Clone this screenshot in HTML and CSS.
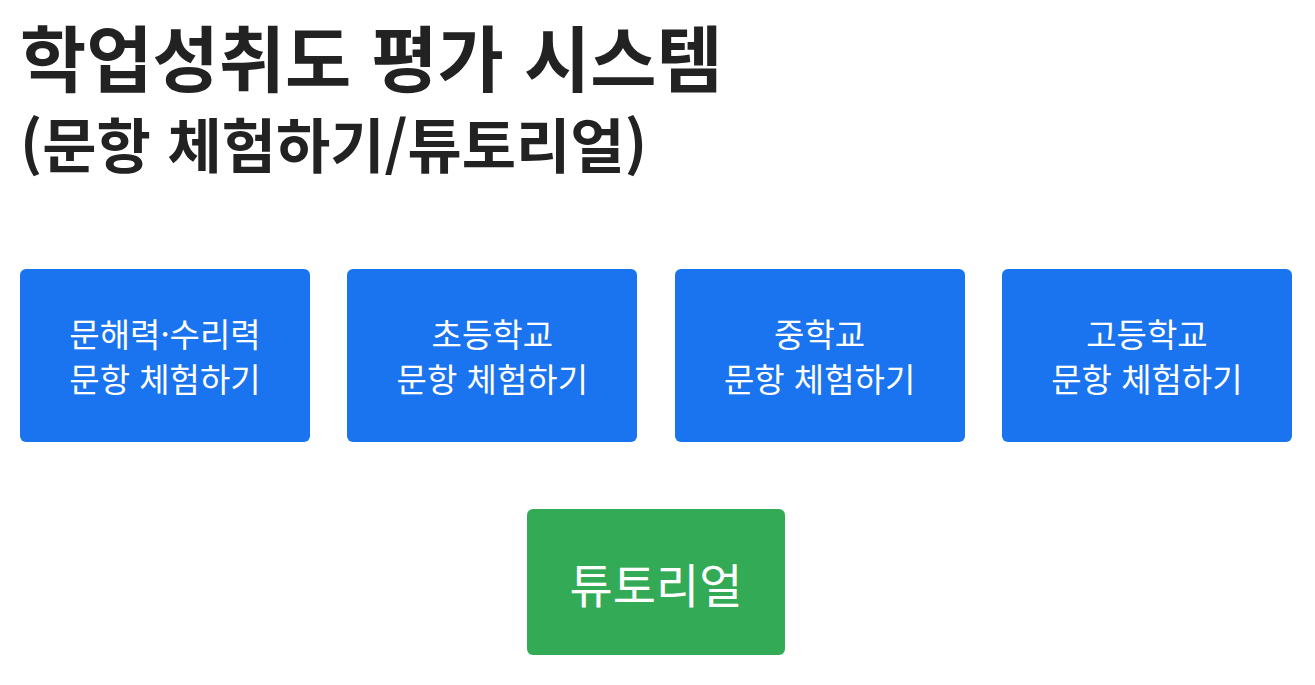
FILE: index.html
```html
<!DOCTYPE html>
<html lang="ko">
<head>
    <meta charset="UTF-8">
    <meta name="viewport" content="width=device-width, initial-scale=1.0">
    <title>학업성취도 평가 시스템</title>
    <link rel="stylesheet" href="styles.css">
</head>
<body>
    <div class="wrap">
        <h1 class="title">학업성취도 평가 시스템<br><span class="sub">(문항 체험하기/튜토리얼)</span></h1>
        <div class="grades">
            <a class="btn btn-blue" href="#">문해력·수리력<br>문항 체험하기</a>
            <a class="btn btn-blue" href="#">초등학교<br>문항 체험하기</a>
            <a class="btn btn-blue" href="#">중학교<br>문항 체험하기</a>
            <a class="btn btn-blue" href="#">고등학교<br>문항 체험하기</a>
        </div>
        <div class="tutorial">
            <a class="btn btn-green" href="#">튜토리얼</a>
        </div>
    </div>
</body>
</html>
```

FILE: styles.css
```css
*{
    padding:0;
    margin:0;
    box-sizing:border-box;
}
body{
    font-family:"Noto Sans CJK KR","Noto Sans",sans-serif;
    color:#222;
    background:#fff;
}
.wrap{
    width:1272px;
    margin-left:20px;
    padding-top:14px;
}
.title{
    font-size:72px;
    line-height:82px;
    font-weight:bold;
}
.title .sub{
    font-size:59px;
    line-height:70px;
}
.grades{
    display:flex;
    gap:37.3px;
    margin-top:91px;
}
.btn{
    display:flex;
    align-items:center;
    justify-content:center;
    text-align:center;
    color:#fff;
    text-decoration:none;
    border-radius:6px;
}
.btn-blue{
    width:290px;
    height:173px;
    background-color:#1a73ef;
    font-size:33px;
    line-height:45px;
}
.tutorial{
    display:flex;
    justify-content:center;
    margin-top:67px;
}
.btn-green{
    width:258px;
    height:146px;
    background-color:#33aa55;
    font-size:47px;
}
```
